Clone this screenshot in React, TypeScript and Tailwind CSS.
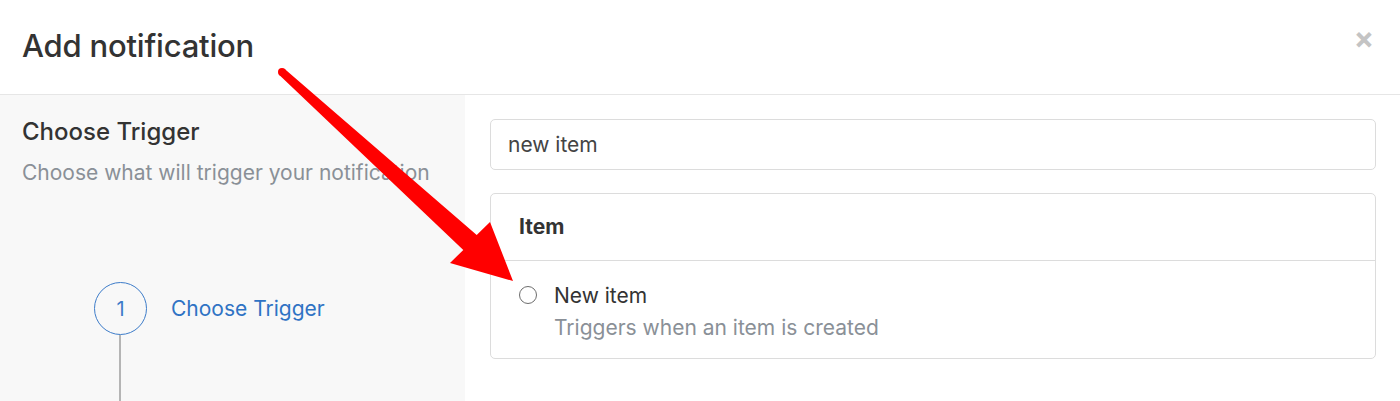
import React from 'react';

const font = { fontFamily: 'Inter, "Noto Sans", sans-serif' };

function Arrow() {
  // red annotation arrow pointing to the radio option
  return (
    <svg className="absolute inset-0 pointer-events-none" width="1400" height="401" viewBox="0 0 1400 401">
      <polygon
        fill="#ff0000"
        points="284.7,69 476.7,235.1 490,222 513,281 450,263 463.3,249.9 279.3,75"
      />
      <circle cx="282" cy="72" r="4" fill="#ff0000" />
    </svg>
  );
}

function Step() {
  return (
    <div className="flex flex-col items-start pl-[94px]">
      <div className="flex items-center">
        <div className="w-[53px] h-[53px] rounded-full border-[1.5px] border-[#3d7cc9] flex items-center justify-center text-[20px] text-[#3d7cc9]">
          1
        </div>
        <span className="ml-[24px] text-[21px] text-[#2f73c4]">Choose Trigger</span>
      </div>
      <div className="ml-[25px] w-[2px] h-[120px] bg-[#b5b5b5]" />
    </div>
  );
}

export default function App() {
  return (
    <div className="relative w-full h-[401px] overflow-hidden bg-white" style={font}>
      {/* header */}
      <div className="h-[95px] flex items-center justify-between pl-[22px] pr-[26px] border-b border-[#e6e6e6]">
        <h1 className="text-[31px] text-[#333] font-medium tracking-[-0.2px] pb-[2px]">Add notification</h1>
        <span className="text-[30px] font-bold text-[#c4c4c4] leading-none -mt-[18px]">×</span>
      </div>

      <div className="flex">
        {/* left side */}
        <div className="w-[465px] h-[306px] bg-[#f8f8f8] pt-[23px] pl-[22px] flex flex-col">
          <div className="text-[24px] leading-[28px] text-[#333] font-medium">Choose Trigger</div>
          <div className="mt-[13px] text-[21px] leading-[28px] text-[#8a9097] whitespace-nowrap">Choose what will trigger your notification</div>
          <div className="mt-[95px] -ml-[22px]">
            <Step />
          </div>
        </div>

        {/* right side */}
        <div className="flex-1 pt-[24px] pl-[25px] pr-[24px]">
          <div className="h-[51px] rounded-[5px] border border-[#dcdcdc] flex items-center px-[17px] text-[21px] text-[#444]">
            new item
          </div>
          <div className="mt-[23px] rounded-[5px] border border-[#dcdcdc]">
            <div className="h-[67px] flex items-center px-[28px] border-b border-[#dcdcdc] text-[21px] font-bold text-[#333]">
              Item
            </div>
            <div className="flex items-start pl-[28px] pt-[22px] pb-[17px]">
              <div className="mt-[3px] w-[18px] h-[18px] rounded-full border border-[#6d6d6d] bg-white" />
              <div className="ml-[17px]">
                <div className="text-[21px] text-[#333] leading-[26px]">New item</div>
                <div className="text-[21px] text-[#8a9097] leading-[26px] mt-[6px]">Triggers when an item is created</div>
              </div>
            </div>
          </div>
        </div>
      </div>

      <Arrow />
    </div>
  );
}
